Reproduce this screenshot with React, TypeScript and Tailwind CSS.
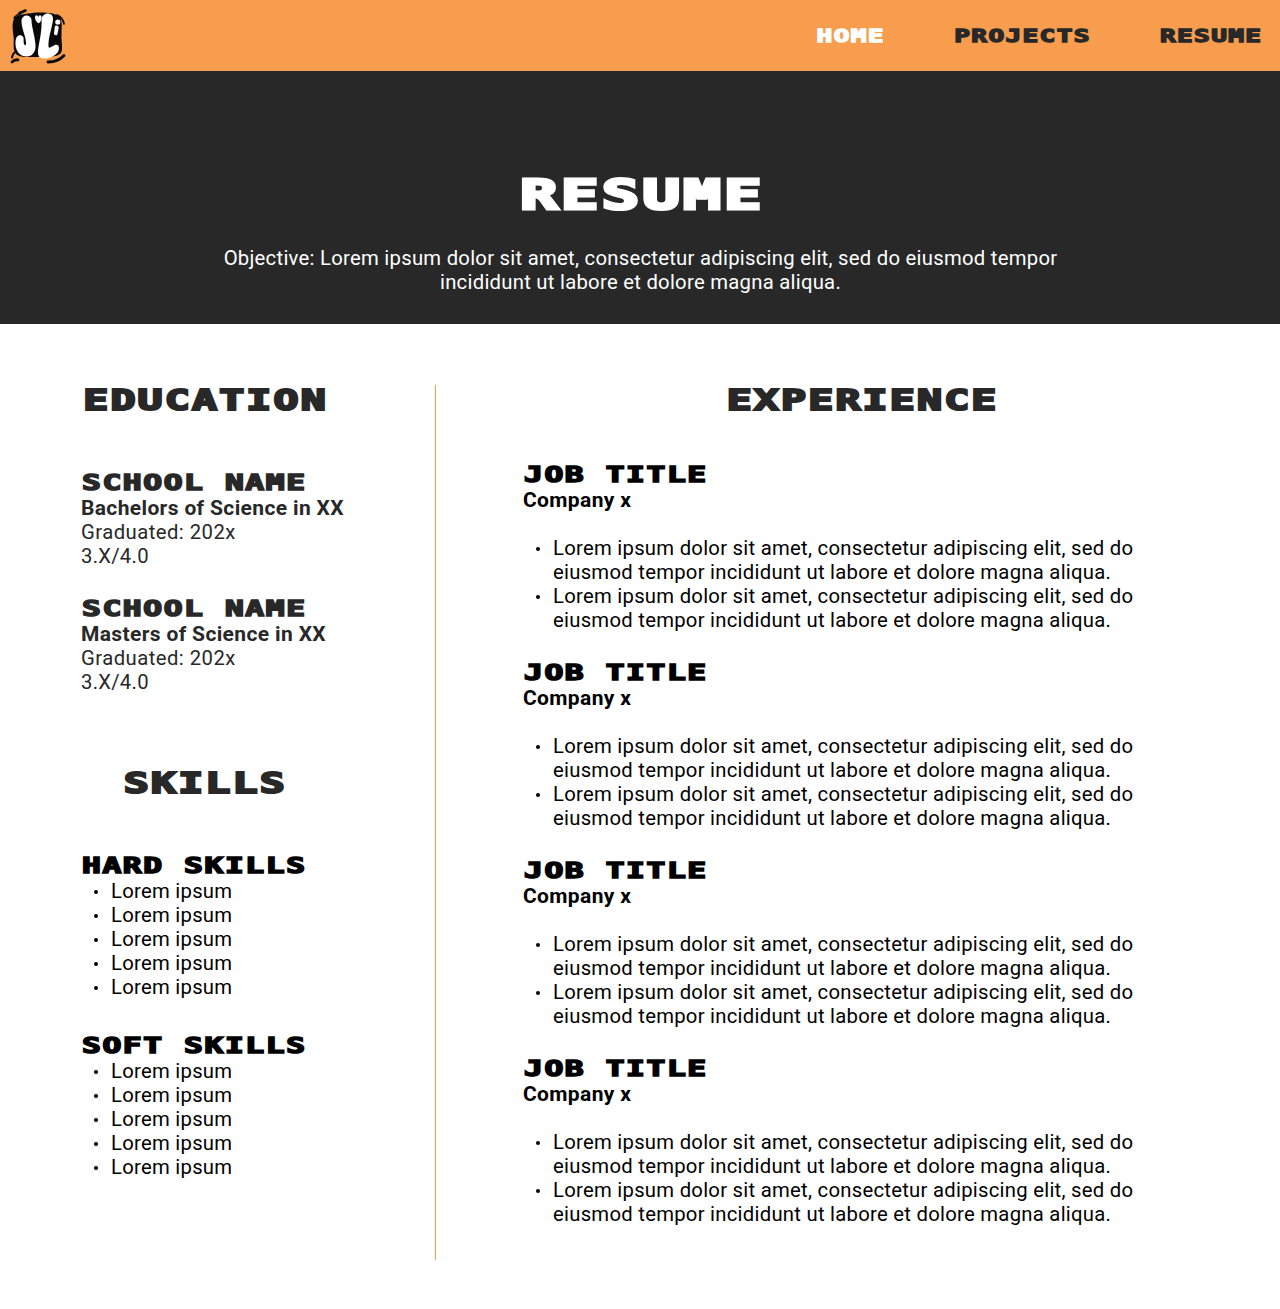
import React from "react";

function Mono({ text, className = "", origin = "origin-center" }: { text: string; className?: string; origin?: string }) {
  return (
    <span
      className={`mr-[-0.0525em] inline-block whitespace-pre font-['DejaVu_Sans_Mono',monospace] font-bold tracking-[0.0525em] scale-x-150 [-webkit-text-stroke:0.075em_currentColor] ${origin} ${className}`}
    >
      {text}
    </span>
  );
}

function Logo() {
  return (
    <svg className="ml-[8px] block" width="60" height="60" viewBox="8 6 60 60" role="img" aria-label="JLi">
      <path d="M14 19C17 14 26 14 34 12.800C44 12 54 13 59 16C63 21 61.500 28 61.500 34C61 41 63 46 61.500 52C59 57 48 57.500 38 57C28 57 20 58 16 54C12 49 14.500 42 13.500 36C12.500 29 12 23 14 19Z" fill="#0a0808" />
      <g fill="none" stroke="#0a0808" strokeLinecap="round">
        <path d="M14 18Q17 14 21 13.500" strokeWidth="1.5" />
        <path d="M19.500 13L25.500 10.500" strokeWidth="2.6" />
        <path d="M57 15Q63 17.500 64 24" strokeWidth="1.7" />
        <path d="M48 62Q58 62 64 55.500" strokeWidth="2.8" />
        <path d="M12 62Q14 59.500 18 59.800" strokeWidth="2.8" />
        <path d="M12 57.500Q12.500 54 14.500 52.500" strokeWidth="2" />
      </g>
      <g fill="#fff">
        <path d="M21.500 21C21.500 14 31 13.500 31.500 20C31.500 27 35 36 35.500 45C36 53 31 57 26 56.500C19 56 15 50 15.500 42C15.700 37 18 34.500 21.500 35.500C25 37 23 41 24 44C25 46.500 26.500 45 26 42C25.500 35 21.500 29 21.500 21Z" />
        <path d="M41.500 20C41.500 12 54 11 53 20C52 28 48 38 48.500 47C50 49 52 46 55 45C59 44 60 48 58 52C54 57 48 59 43 58.500C37.500 58 37.500 53 38.500 47C40 38 42 30 41.500 20Z" />
        <path d="M35 17.500C35 15 37.500 14.500 38.300 17C39.500 14 42 15 41.500 18C41 21 40 23 38.500 23.200C36.500 22.500 35 20 35 17.500Z" />
        <circle cx="57.800" cy="22" r="2.600" />
        <path d="M54.800 27C55 25 58.800 25 58.700 28L57.500 34C57 36 53.800 35.500 54 33Z" />
      </g>
    </svg>
  );
}

const body = "text-[20.3px] tracking-[0.26px]";
const strong = "font-bold text-[21px] tracking-[0.36px]";

function SectionTitle({ children }: { children: string }) {
  return (
    <h2 className="flex h-[30px] items-center justify-center text-[#282828]">
      <Mono text={children} className="text-[27.7px] leading-[30px]" />
    </h2>
  );
}

function ItemTitle({ children }: { children: string }) {
  return (
    <h3 className="h-[26px] pl-[0.5px]">
      <Mono text={children} origin="origin-left" className="text-[20.8px] leading-[27px]" />
    </h3>
  );
}

function Bullet({ children }: { children: React.ReactNode }) {
  return (
    <li className="flex">
      <span className="mt-[11px] mr-[13px] ml-[13px] size-1 shrink-0 rounded-full bg-current" />
      <span className={body}>{children}</span>
    </li>
  );
}

function School({ degree }: { degree: string }) {
  return (
    <div className="text-[#282828]">
      <ItemTitle>SCHOOL NAME</ItemTitle>
      <p className={strong}>{degree}</p>
      <p className="text-[20.3px] tracking-[0.45px]">Graduated: 202x</p>
      <p className={body}>3.X/4.0</p>
    </div>
  );
}

function SkillGroup({ title }: { title: string }) {
  return (
    <div>
      <ItemTitle>{title}</ItemTitle>
      <ul>
        {[0, 1, 2, 3, 4].map((i) => (
          <Bullet key={i}>Lorem ipsum</Bullet>
        ))}
      </ul>
    </div>
  );
}

function Job() {
  return (
    <article>
      <ItemTitle>JOB TITLE</ItemTitle>
      <p className={`mb-6 ${strong}`}>Company x</p>
      <ul>
        {[0, 1].map((i) => (
          <Bullet key={i}>
            Lorem ipsum dolor sit amet, consectetur adipiscing elit, sed do
            <br />
            eiusmod tempor incididunt ut labore et dolore magna aliqua.
          </Bullet>
        ))}
      </ul>
    </article>
  );
}

export default function App() {
  return (
    <div className="min-h-[1309px] w-[1280px] bg-white font-[Roboto,sans-serif] text-[20px] leading-6 text-black">
      <header className="flex h-[71px] items-center justify-between bg-[#f79d4d] pr-[18px]">
        <Logo />
        <nav className="flex gap-[70px] text-[17.4px] leading-6 text-[#282828]">
          <a className="flex w-[68px] justify-center text-white"><Mono text="HOME" /></a>
          <a className="flex w-[136px] justify-center"><Mono text="PROJECTS" /></a>
          <a className="flex w-[102px] justify-center"><Mono text="RESUME" /></a>
        </nav>
      </header>
      <section className="h-[253px] bg-[#282828] pt-[98px] text-center text-white">
        <h1 className="flex h-[52px] items-center justify-center pl-[3px]">
          <Mono text="RESUME" className="text-[41.5px] leading-[52px]" />
        </h1>
        <p className={`mt-[25px] pl-px ${body}`}>
          Objective: Lorem ipsum dolor sit amet, consectetur adipiscing elit, sed do eiusmod tempor
          <br />
          incididunt ut labore et dolore magna aliqua.
        </p>
      </section>
      <main className="flex pt-[61px]">
        <aside className="h-[875px] w-[436px] border-r border-[#f79d4d] pl-[81px]">
          <div className="w-[248px] pt-px">
            <SectionTitle>EDUCATION</SectionTitle>
          </div>
          <div className="mt-[54px] flex flex-col gap-7">
            <School degree="Bachelors of Science in XX" />
            <School degree="Masters of Science in XX" />
          </div>
          <div className="mt-[74px] w-[248px] pt-px">
            <SectionTitle>SKILLS</SectionTitle>
          </div>
          <div className="mt-[54px] flex flex-col gap-[34px]">
            <SkillGroup title="HARD SKILLS" />
            <SkillGroup title="SOFT SKILLS" />
          </div>
        </aside>
        <section className="flex-1 pt-px pl-[7px]">
          <SectionTitle>EXPERIENCE</SectionTitle>
          <div className="mt-[46px] flex flex-col gap-7 pl-[80px]">
            <Job />
            <Job />
            <Job />
            <Job />
          </div>
        </section>
      </main>
    </div>
  );
}
